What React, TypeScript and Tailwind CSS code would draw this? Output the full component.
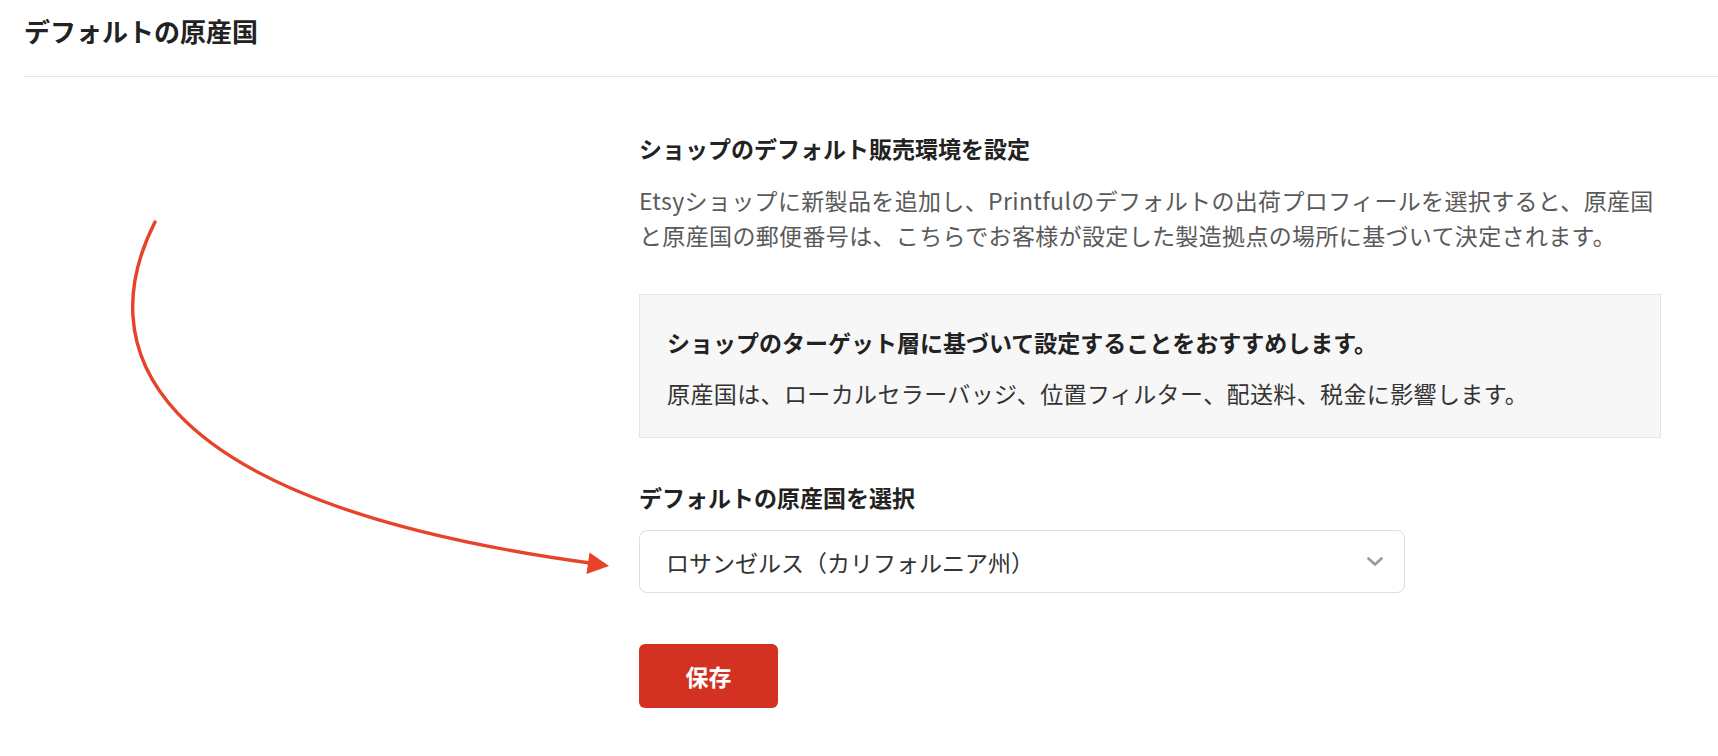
import { useState } from "react";

const origins = [
  "ロサンゼルス（カリフォルニア州）",
  "シャーロット（ノースカロライナ州）",
  "ダラス（テキサス州）",
];

function Chevron() {
  return (
    <svg width="18" height="11" viewBox="0 0 18 11" fill="none" className="shrink-0">
      <path d="M2.5 2.5l6.5 6 6.5-6" stroke="#9a9a9a" strokeWidth="2.7" strokeLinecap="round" strokeLinejoin="round" />
    </svg>
  );
}

// the red hand-drawn pointer sitting over the page
function Pointer() {
  return (
    <svg
      className="pointer-events-none absolute left-0 top-0"
      width="700"
      height="640"
      viewBox="0 0 700 640"
      fill="none"
    >
      <path d="M155 222 C95 340, 130 500, 590 563" stroke="#e8422a" strokeWidth="3.4" strokeLinecap="round" />
      <path d="M609 566 L586.5 574 L589.5 552.5 Z" fill="#e8422a" />
    </svg>
  );
}

export default function App() {
  const [origin, setOrigin] = useState(origins[0]);

  return (
    <div
      className="relative min-h-screen bg-white pl-[24px] text-[#222]"
      style={{ fontFamily: '"Noto Sans CJK JP", "Noto Sans", sans-serif' }}
    >
      <div className="border-b border-[#e6e6e6] pb-[26px] pt-[11px]">
        <h1 className="text-[26px] font-bold leading-[39px]">デフォルトの原産国</h1>
      </div>

      <div className="grid grid-cols-[615px_1022px]">
        <div />
        <div className="pt-[54px]">
          <h2 className="text-[23px] font-bold leading-[34px]">ショップのデフォルト販売環境を設定</h2>
          <p className="mt-[18px] text-[23px] leading-[35px] tracking-[0.35px] text-[#5a5a5a]">
            Etsyショップに新製品を追加し、Printfulのデフォルトの出荷プロフィールを選択すると、原産国と原産国の郵便番号は、こちらでお客様が設定した製造拠点の場所に基づいて決定されます。
          </p>

          <div className="mt-[41px] border border-[#e6e6e6] bg-[#f7f7f7] px-[27px] pb-[27px] pt-[30px]">
            <p className="text-[23px] font-bold leading-[34px]">
              ショップのターゲット層に基づいて設定することをおすすめします。
            </p>
            <p className="mt-[17px] text-[23px] leading-[34px] tracking-[0.38px] text-[#333]">
              原産国は、ローカルセラーバッジ、位置フィルター、配送料、税金に影響します。
            </p>
          </div>

          <label className="mt-[42px] block text-[23px] font-bold leading-[34px]">デフォルトの原産国を選択</label>
          <div className="relative mt-[16px] flex h-[63px] w-[766px] items-center justify-between rounded-[8px] border border-[#dedede] bg-white pl-[26px] pr-[20px]">
            <span className="text-[23px] leading-[34px] text-[#333]">{origin}</span>
            <Chevron />
            <select
              value={origin}
              onChange={(e) => setOrigin(e.target.value)}
              className="absolute inset-0 cursor-pointer opacity-0"
            >
              {origins.map((o) => (
                <option key={o}>{o}</option>
              ))}
            </select>
          </div>

          <button className="mt-[51px] flex h-[64px] w-[139px] items-center justify-center rounded-[6px] bg-[#d33222] text-[23px] font-bold text-white">
            保存
          </button>
        </div>
      </div>

      <Pointer />
    </div>
  );
}
